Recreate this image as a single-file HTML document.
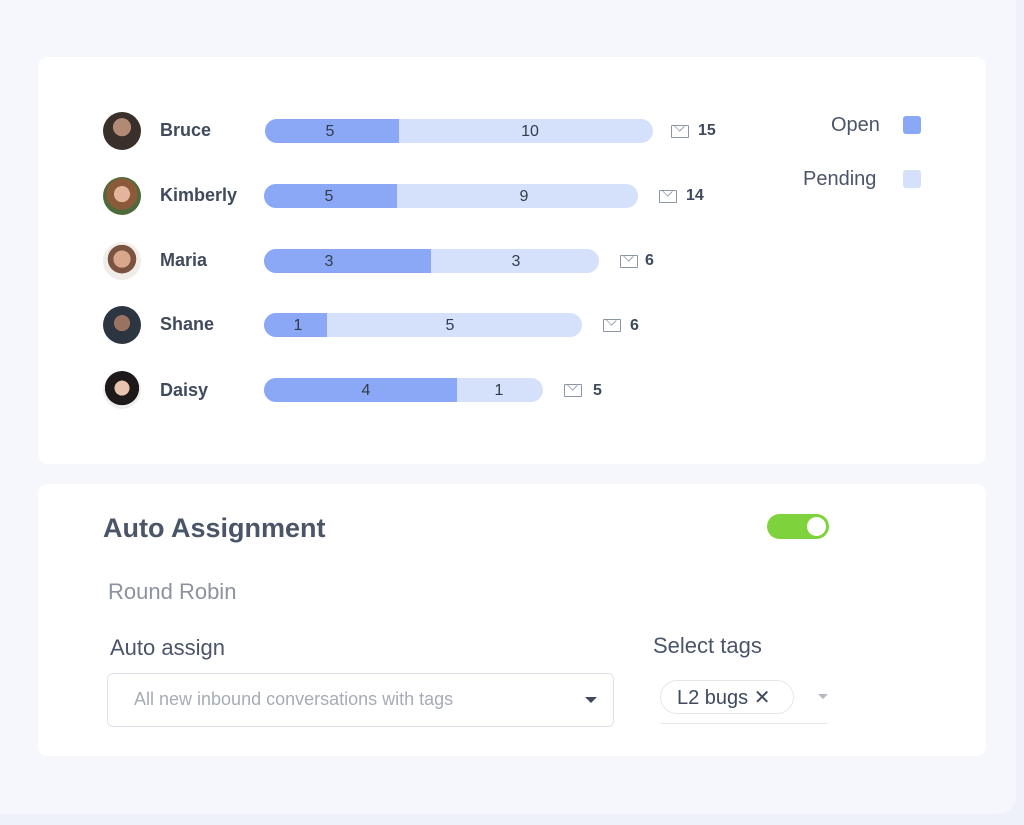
<!DOCTYPE html>
<html><head><style>
body{margin:0;width:1024px;height:825px;background:#eef1f9;font-family:"Liberation Sans",sans-serif;position:relative;overflow:hidden}
.outer{position:absolute;left:0;top:0;width:1016px;height:814px;background:#f5f7fd;border-radius:0 0 18px 0}
.card{position:absolute;left:38px;width:948px;background:#fff;border-radius:10px}
.av{position:absolute;left:103px;width:38px;height:38px;border-radius:50%;overflow:hidden;background:#6b5a4e}
.name{position:absolute;left:160px;font-size:18px;font-weight:bold;color:#3f4a5c}
.bar{position:absolute;height:24px;border-radius:12px;background:#d5e0fb;overflow:hidden;font-size:16px;color:#333c4c}
.bar .d{position:absolute;left:0;top:0;height:24px;background:#8aa8f5}
.bar span{position:absolute;top:4px;transform:translateX(-50%)}
.mail{position:absolute;width:16px;height:11px;border:1.5px solid #8d96a5;border-radius:1px}
.mail:after{content:"";position:absolute;left:2px;top:-5px;width:9px;height:9px;border-right:1.5px solid #8d96a5;border-bottom:1.5px solid #8d96a5;transform:rotate(45deg) scale(.9,.7)}
.cnt{position:absolute;font-size:16px;font-weight:bold;color:#3f4a5c}
.lg{position:absolute;font-size:20px;color:#4a5568}
.sq{position:absolute;width:18px;height:18px;border-radius:3px}
</style></head><body>
<div class="outer"></div>
<div class="card" style="top:57px;height:407px"></div>
<div class="card" style="top:484px;height:272px"></div>

<div class="av" style="top:112px;background:radial-gradient(circle at 50% 40%,#b08a75 0 30%,#3a302b 31%)"></div>
<div class="av" style="top:177px;background:radial-gradient(circle at 50% 45%,#e2b59c 0 28%,#8a5a3a 29% 55%,#4d6b3a 56%)"></div>
<div class="av" style="top:242px;background:radial-gradient(circle at 50% 45%,#d8a78c 0 30%,#7a5440 31% 50%,#f0ece8 51%)"></div>
<div class="av" style="top:306px;background:radial-gradient(circle at 50% 45%,#9a7260 0 28%,#2e3542 29%)"></div>
<div class="av" style="top:371px;background:radial-gradient(circle at 50% 45%,#e8c4b0 0 26%,#1e1a1a 27% 60%,#eee 61%)"></div>

<div class="name" style="top:120px">Bruce</div>
<div class="name" style="top:185px">Kimberly</div>
<div class="name" style="top:250px">Maria</div>
<div class="name" style="top:314px">Shane</div>
<div class="name" style="top:380px">Daisy</div>

<div class="bar" style="left:265px;top:119px;width:388px"><div class="d" style="width:134px"></div><span style="left:65px">5</span><span style="left:265px">10</span></div>
<div class="bar" style="left:264px;top:184px;width:374px"><div class="d" style="width:133px"></div><span style="left:65px">5</span><span style="left:260px">9</span></div>
<div class="bar" style="left:264px;top:249px;width:335px"><div class="d" style="width:167px"></div><span style="left:65px">3</span><span style="left:252px">3</span></div>
<div class="bar" style="left:264px;top:313px;width:318px"><div class="d" style="width:63px"></div><span style="left:34px">1</span><span style="left:186px">5</span></div>
<div class="bar" style="left:264px;top:378px;width:279px"><div class="d" style="width:193px"></div><span style="left:102px">4</span><span style="left:235px">1</span></div>

<div class="mail" style="left:671px;top:125px"></div><div class="cnt" style="left:698px;top:122px">15</div>
<div class="mail" style="left:659px;top:190px"></div><div class="cnt" style="left:686px;top:187px">14</div>
<div class="mail" style="left:620px;top:255px"></div><div class="cnt" style="left:645px;top:252px">6</div>
<div class="mail" style="left:603px;top:319px"></div><div class="cnt" style="left:630px;top:317px">6</div>
<div class="mail" style="left:564px;top:384px"></div><div class="cnt" style="left:593px;top:382px">5</div>

<div class="lg" style="left:831px;top:114px">Open</div><div class="sq" style="left:903px;top:116px;background:#8aa8f5"></div>
<div class="lg" style="left:803px;top:168px">Pending</div><div class="sq" style="left:903px;top:170px;background:#d5e0fb"></div>

<div style="position:absolute;left:103px;top:513px;font-size:27px;font-weight:bold;color:#4a5568">Auto Assignment</div>
<div style="position:absolute;left:767px;top:514px;width:62px;height:25px;border-radius:13px;background:#7ed23b"><div style="position:absolute;right:3px;top:3px;width:19px;height:19px;border-radius:50%;background:#fff"></div></div>
<div style="position:absolute;left:108px;top:579px;font-size:22px;color:#8c939e">Round Robin</div>
<div style="position:absolute;left:110px;top:635px;font-size:22px;color:#4a5568">Auto assign</div>
<div style="position:absolute;left:107px;top:673px;width:505px;height:52px;border:1.5px solid #dde1e7;border-radius:6px"></div>
<div style="position:absolute;left:134px;top:689px;font-size:18px;color:#a6acb5">All new inbound conversations with tags</div>
<div style="position:absolute;left:585px;top:697px;border-left:6px solid transparent;border-right:6px solid transparent;border-top:6px solid #3f4a5c"></div>
<div style="position:absolute;left:653px;top:633px;font-size:22px;color:#4a5568">Select tags</div>
<div style="position:absolute;left:660px;top:680px;width:132px;height:32px;border:1.5px solid #e4e7ec;border-radius:17px"></div>
<div style="position:absolute;left:677px;top:685px;font-size:20px;color:#3f4a5c">L2 bugs ✕</div>
<div style="position:absolute;left:818px;top:694px;border-left:5px solid transparent;border-right:5px solid transparent;border-top:5px solid #b5bac2"></div>
<div style="position:absolute;left:660px;top:723px;width:168px;height:1px;background:#e4e7ec"></div>
</body></html>
